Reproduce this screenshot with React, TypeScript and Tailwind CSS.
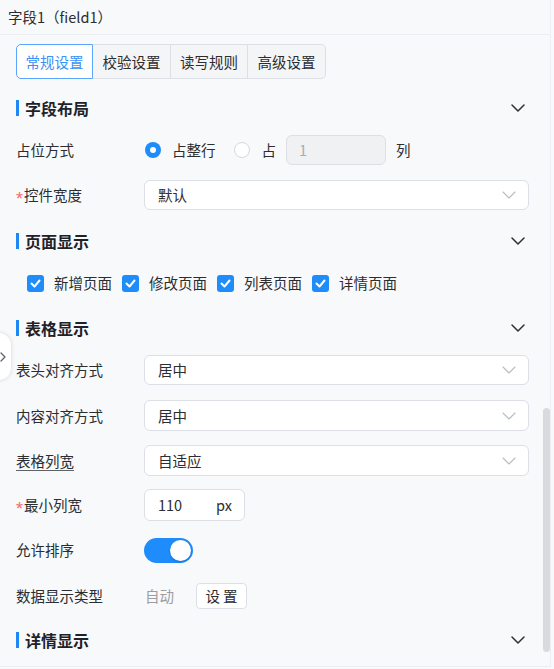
import React from "react";

const FONT = { fontFamily: '"Noto Sans CJK SC", "Noto Sans", sans-serif' };

function Chevron({ className }: { className?: string }) {
  return (
    <svg width="14" height="8" viewBox="0 0 14 8" fill="none" className={className}>
      <path d="M1 1l6 6 6-6" stroke="currentColor" strokeWidth="1.5" strokeLinecap="round" strokeLinejoin="round" />
    </svg>
  );
}

function SectionHeader({ title, className }: { title: string; className?: string }) {
  return (
    <div className={`flex h-[30px] items-center pr-[4px] ${className ?? ""}`}>
      <span className="h-[16px] w-[3px] bg-[#1e88f5]" />
      <span className="ml-[6px] text-[16px] font-bold text-[#1f2329]">{title}</span>
      <Chevron className="ml-auto text-[#303133]" />
    </div>
  );
}

function Label({ text, required, underline }: { text: string; required?: boolean; underline?: boolean }) {
  return (
    <div className="flex w-[128px] shrink-0 items-center text-[14.5px] text-[#2b2d30]">
      {required && (
        <span
          style={{ fontFamily: '"Liberation Sans", sans-serif' }}
          className="mr-[1px] translate-y-[4px] text-[18px] leading-none text-[#f56c6c]"
        >
          *
        </span>
      )}
      <span className={underline ? "underline underline-offset-[3px] decoration-[#606266]" : ""}>{text}</span>
    </div>
  );
}

function Select({ value, h = "h-[30px]" }: { value: string; h?: string }) {
  return (
    <div className={`flex ${h} w-[385px] items-center rounded-[6px] border border-[#dcdfe6] bg-white pl-[13px] pr-[12px]`}>
      <span className="text-[14.5px] text-[#2b2d30]">{value}</span>
      <svg width="14" height="8" viewBox="0 0 14 8" fill="none" className="ml-auto text-[#b8bcc4]">
        <path d="M1 1l6 6 6-6" stroke="currentColor" strokeWidth="1.1" strokeLinecap="round" strokeLinejoin="round" />
      </svg>
    </div>
  );
}

function Check({ label }: { label: string }) {
  return (
    <div className="flex items-center">
      <span className="flex h-[17px] w-[17px] items-center justify-center rounded-[3px] bg-[#1e8cfa]">
        <svg width="11" height="9" viewBox="0 0 11 9" fill="none">
          <path d="M1.5 4.5l3 3 5-6" stroke="white" strokeWidth="2" strokeLinecap="round" strokeLinejoin="round" />
        </svg>
      </span>
      <span className="ml-[10px] text-[14.5px] text-[#2b2d30]">{label}</span>
    </div>
  );
}

export default function App() {
  return (
    <div style={FONT} className="relative flex h-[669px] w-[554px] overflow-hidden bg-[#f8f9fb]">
      <div className="flex h-[667px] w-[551px] flex-col border-r border-b border-[#eceef2]">
        {/* title bar */}
        <div className="flex h-[35px] shrink-0 items-center border-b border-[#eceef2] px-[8px] text-[14.5px] text-[#2b2d30]">
          字段1（field1）
        </div>

        <div className="flex flex-col pl-[16px] pr-[21px]">
          {/* tabs */}
          <div className="mt-[9px] flex h-[35px] w-[310px] text-[14.5px]">
            <div className="flex w-[77px] items-center justify-center rounded-l-[5px] border border-[#5aa6ff] bg-white text-[#3b91f7]">
              常规设置
            </div>
            <div className="flex w-[78px] items-center justify-center border-y border-r border-[#dcdfe6] bg-[#f4f5f7] text-[#2b2d30]">
              校验设置
            </div>
            <div className="flex w-[77px] items-center justify-center border-y border-r border-[#dcdfe6] bg-[#f4f5f7] text-[#2b2d30]">
              读写规则
            </div>
            <div className="flex w-[78px] items-center justify-center rounded-r-[5px] border-y border-r border-[#dcdfe6] bg-[#f4f5f7] text-[#2b2d30]">
              高级设置
            </div>
          </div>

          <SectionHeader title="字段布局" className="mt-[14px]" />

          <div className="mt-[12px] flex h-[30px] items-center">
            <Label text="占位方式" />
            <div className="flex items-center">
              <span className="ml-[1px] flex h-[16px] w-[16px] items-center justify-center rounded-full bg-[#1e8cfa]">
                <span className="h-[6px] w-[6px] rounded-full bg-white" />
              </span>
              <span className="ml-[11px] text-[14.5px] text-[#2b2d30]">占整行</span>
              <span className="ml-[18px] h-[16px] w-[16px] rounded-full border border-[#d4d7de] bg-white" />
              <span className="ml-[12px] text-[14.5px] text-[#2b2d30]">占</span>
              <div className="ml-[10px] flex h-[30px] w-[100px] items-center rounded-[6px] border border-[#dcdfe6] bg-[#f0f1f3] pl-[12px] text-[14.5px] text-[#a8abb2]">
                1
              </div>
              <span className="ml-[10px] text-[14.5px] text-[#2b2d30]">列</span>
            </div>
          </div>

          <div className="mt-[15px] flex h-[30px] items-center">
            <Label text="控件宽度" required />
            <Select value="默认" />
          </div>

          <SectionHeader title="页面显示" className="mt-[16px]" />

          <div className="mt-[12px] flex h-[30px] items-center gap-[10px] pl-[11px]">
            <Check label="新增页面" />
            <Check label="修改页面" />
            <Check label="列表页面" />
            <Check label="详情页面" />
          </div>

          <SectionHeader title="表格显示" className="mt-[15px]" />

          <div className="mt-[12px] flex h-[30px] items-center">
            <Label text="表头对齐方式" />
            <Select value="居中" />
          </div>

          <div className="mt-[15px] flex h-[31px] items-center">
            <Label text="内容对齐方式" />
            <Select value="居中" h="h-[31px]" />
          </div>

          <div className="mt-[14px] flex h-[31px] items-center">
            <Label text="表格列宽" underline />
            <Select value="自适应" h="h-[31px]" />
          </div>

          <div className="mt-[13px] flex h-[32px] items-center">
            <Label text="最小列宽" required />
            <div className="flex h-[32px] w-[101px] items-center rounded-[6px] border border-[#dcdfe6] bg-white pl-[13px] pr-[12px] text-[14.5px] text-[#2b2d30]">
              <span>110</span>
              <span className="ml-auto">px</span>
            </div>
          </div>

          <div className="mt-[14px] flex h-[30px] items-center">
            <Label text="允许排序" />
            <div className="flex h-[25px] w-[49px] items-center justify-end rounded-full bg-[#1e8cfa] pr-[2px]">
              <span className="h-[21px] w-[21px] rounded-full bg-white shadow-[0_1px_2px_rgba(0,0,0,0.2)]" />
            </div>
          </div>

          <div className="mt-[16px] flex h-[30px] items-center">
            <Label text="数据显示类型" />
            <span className="ml-[1px] text-[14.5px] text-[#9a9da3]">自动</span>
            <div className="ml-[22px] flex h-[26px] w-[51px] items-center justify-center rounded-[4px] border border-[#dcdfe6] bg-white text-[14.5px] text-[#2b2d30]">
              设 置
            </div>
          </div>

          <SectionHeader title="详情显示" className="mt-[14px]" />
        </div>
      </div>

      {/* collapse handle on the left edge */}
      <div className="absolute left-[-12px] top-[333px] flex h-[47px] w-[23px] items-center justify-end rounded-r-[12px] bg-white pr-[5px] shadow-[0_0_4px_rgba(0,0,0,0.15)]">
        <svg width="6" height="10" viewBox="0 0 6 10" fill="none">
          <path d="M1 1l4 4-4 4" stroke="#606266" strokeWidth="1.3" strokeLinecap="round" strokeLinejoin="round" />
        </svg>
      </div>

      {/* scrollbar thumb */}
      <div className="absolute left-[543px] top-[408px] h-[244px] w-[7px] rounded-full bg-[#d9dadd]" />
    </div>
  );
}
